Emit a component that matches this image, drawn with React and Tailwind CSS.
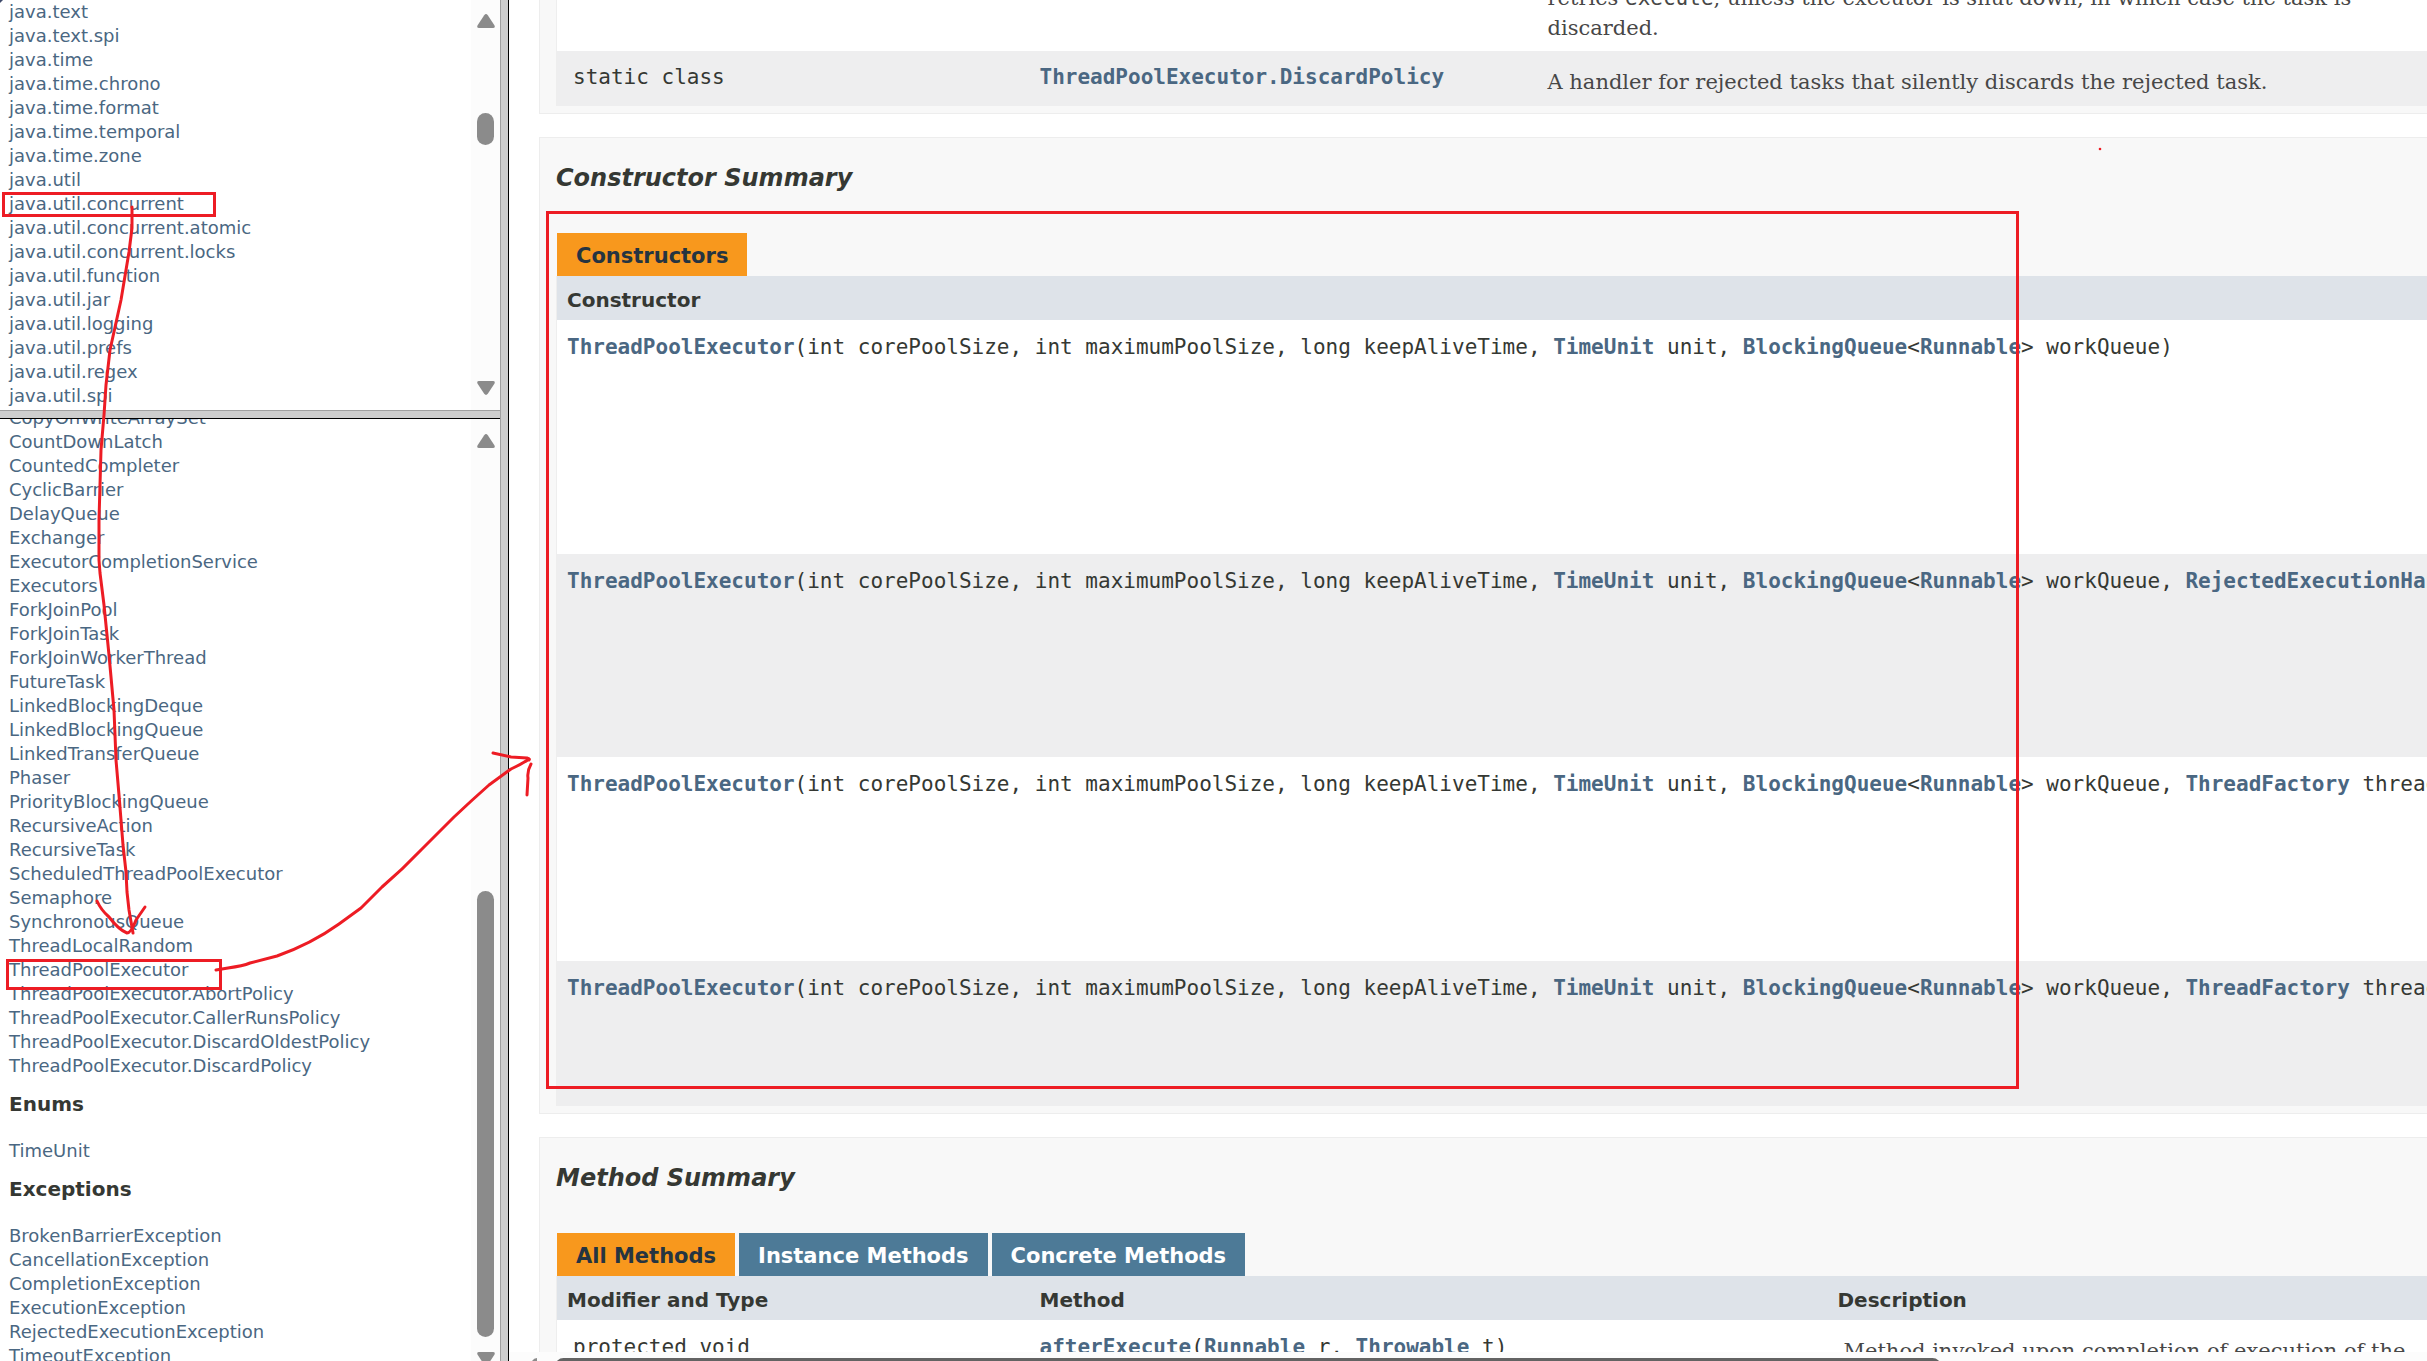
const packages = [
  'java.text', 'java.text.spi', 'java.time', 'java.time.chrono', 'java.time.format',
  'java.time.temporal', 'java.time.zone', 'java.util', 'java.util.concurrent',
  'java.util.concurrent.atomic', 'java.util.concurrent.locks', 'java.util.function',
  'java.util.jar', 'java.util.logging', 'java.util.prefs', 'java.util.regex', 'java.util.spi',
];

const classes = [
  'CopyOnWriteArraySet', 'CountDownLatch', 'CountedCompleter', 'CyclicBarrier', 'DelayQueue',
  'Exchanger', 'ExecutorCompletionService', 'Executors', 'ForkJoinPool', 'ForkJoinTask',
  'ForkJoinWorkerThread', 'FutureTask', 'LinkedBlockingDeque', 'LinkedBlockingQueue',
  'LinkedTransferQueue', 'Phaser', 'PriorityBlockingQueue', 'RecursiveAction', 'RecursiveTask',
  'ScheduledThreadPoolExecutor', 'Semaphore', 'SynchronousQueue', 'ThreadLocalRandom',
  'ThreadPoolExecutor', 'ThreadPoolExecutor.AbortPolicy', 'ThreadPoolExecutor.CallerRunsPolicy',
  'ThreadPoolExecutor.DiscardOldestPolicy', 'ThreadPoolExecutor.DiscardPolicy',
];

const exceptions = [
  'BrokenBarrierException', 'CancellationException', 'CompletionException',
  'ExecutionException', 'RejectedExecutionException', 'TimeoutException',
];

function LinkList({ items }) {
  return (
    <ul className="text-[18px] leading-6 text-[#4A6782]">
      {items.map((name) => (
        <li key={name}><a href="#">{name}</a></li>
      ))}
    </ul>
  );
}

function Arrow({ down }) {
  return (
    <svg viewBox="0 0 18 14" className={down ? 'h-[14px] w-[18px] shrink-0 rotate-180' : 'h-[14px] w-[18px] shrink-0'}>
      <path d="M7.2 1.2Q9 -1 10.8 1.2L17.4 11.2Q18.6 14 16 14H2Q-0.6 14 0.6 11.2Z" fill="#8b8b8b" />
    </svg>
  );
}

function TypeLink({ children }) {
  return <a href="#" className="font-bold text-[#4A6782]">{children}</a>;
}

function Heading({ children }) {
  return <h3 className="text-[24px] leading-8 font-bold italic">{children}</h3>;
}

function Tab({ active, children }) {
  return (
    <button
      type="button"
      className={
        active
          ? 'h-[43px] bg-[#F8981D] px-[19px] pt-1 text-[21px] font-bold text-[#253441]'
          : 'h-[43px] bg-[#4D7A97] px-[19px] pt-1 text-[21px] font-bold text-white'
      }
    >
      {children}
    </button>
  );
}

function HeadCell({ children }) {
  return (
    <th className="h-11 bg-[#dee3e9] px-[10px] pt-1 text-left text-[20px] font-bold">{children}</th>
  );
}

const mono = "font-['DejaVu_Sans_Mono',monospace] text-[21px] leading-[30px]";
const serif = "font-['DejaVu_Serif',serif] text-[21px] leading-[30px] text-[#474747]";

function Constructor({ className, children }) {
  return (
    <tr className={className}>
      <td className="px-[10px] pt-3 align-top whitespace-nowrap">
        <code className={mono}>
          <TypeLink>ThreadPoolExecutor</TypeLink>(int corePoolSize, int maximumPoolSize, long keepAliveTime,{' '}
          <TypeLink>TimeUnit</TypeLink> unit, <TypeLink>BlockingQueue</TypeLink>&lt;<TypeLink>Runnable</TypeLink>&gt; workQueue{children})
        </code>
      </td>
    </tr>
  );
}

function Annotations() {
  return (
    <svg className="pointer-events-none absolute top-0 left-0 h-[1361px] w-[2427px]" viewBox="0 0 2427 1361" fill="none" stroke="#ED1C24" strokeWidth="3">
      <path d="M0 0H3L0 3Z" fill="#3f4a6b" stroke="none" />
      <rect x="3.500" y="193.500" width="211" height="22" />
      <rect x="7.500" y="960.500" width="213" height="28" />
      <rect x="547.500" y="212.500" width="1470" height="875" />
      <g strokeLinecap="round" strokeLinejoin="round" strokeWidth="3">
        <path d="M132 207V228L129 252L121 300L110 350L106 385L104 415L101 450L99 520V560L100 573L104 605L109 655L114 710L116 760L119 795L123 845L126 872L127 892L129 910L133 933" />
        <path d="M97 901Q101 910 109 917Q119 930 127 933Q131 933 136 920L145 907" />
        <path d="M216 970L228 968Q243 966 250 963L277 956Q311 944 339 924L361 908L382 887Q402 870 421 850L454 817Q472 800 489 785L511 769Q522 764 529 759" />
        <path d="M493 753Q502 755 511 757L527 758Q530 759 529 760" />
        <path d="M531 764Q527 771 528 778L527 795" />
      </g>
      <circle cx="2100" cy="149" r="1.300" fill="#ED1C24" stroke="none" />
    </svg>
  );
}

export default function App() {
  return (
    <div className="relative flex h-screen overflow-hidden bg-white font-['DejaVu_Sans',sans-serif] text-[#353833]">
      <aside className="flex w-[509px] shrink-0 border-r border-black">
        <div className="flex min-w-0 flex-1 flex-col">
          <nav className="flex h-[410px] shrink-0 overflow-hidden">
            <div className="flex-1 pl-[9px]">
              <LinkList items={packages} />
            </div>
            <div className="flex w-[29px] flex-col items-center bg-[#fcfcfc] pt-[14px] pb-[15px]">
              <Arrow />
              <div className="mt-[85px] h-8 w-[17px] rounded-full bg-[#8b8b8b]" />
              <div className="flex-1" />
              <Arrow down />
            </div>
          </nav>
          <div className="h-[9px] shrink-0 border-t border-b border-t-[#a0a0a0] border-b-black bg-[#cecece]" />
          <nav className="flex min-h-0 flex-1 overflow-hidden">
            <div className="-mt-[13px] flex-1 pl-[9px]">
              <LinkList items={classes} />
              <h2 className="mt-[14px] mb-[23px] text-[20px] leading-6 font-bold">Enums</h2>
              <LinkList items={['TimeUnit']} />
              <h2 className="mt-[14px] mb-[23px] text-[20px] leading-6 font-bold">Exceptions</h2>
              <LinkList items={exceptions} />
            </div>
            <div className="flex w-[29px] flex-col items-center bg-[#fcfcfc] pt-[15px]">
              <Arrow />
              <div className="flex-1" />
              <div className="mb-[15px] h-[446px] w-[17px] shrink-0 rounded-full bg-[#8b8b8b]" />
              <div className="h-[9px] overflow-hidden"><Arrow down /></div>
            </div>
          </nav>
        </div>
        <div className="w-2 border-l border-[#a0a0a0] bg-[#cecece]" />
      </aside>

      <main className="flex min-w-0 flex-1 flex-col">
        <div className="min-h-0 flex-1 overflow-hidden">
          <div className="-mt-[18px] flex w-[130%] flex-col gap-[23px] pl-[30px]">
            <section className="border border-[#ededed] bg-[#f8f8f8] px-4 pb-[7px]">
              <table className="w-full table-fixed border-l border-[#eee]">
                <colgroup>
                  <col className="w-[473px]" />
                  <col className="w-[502px]" />
                  <col />
                </colgroup>
                <tbody>
                  <tr className="bg-white">
                    <td />
                    <td />
                    <td className={`px-4 pb-2 ${serif}`}>
                      retries <code className="font-['DejaVu_Sans_Mono',monospace]">execute</code>, unless the executor is shut down, in which case the task is<br />discarded.
                    </td>
                  </tr>
                  <tr className="bg-[#eeeeef]">
                    <td className={`h-[55px] px-4 pt-[11px] align-top ${mono}`}>static class</td>
                    <td className={`px-[10px] pt-[11px] align-top ${mono}`}><TypeLink>ThreadPoolExecutor.DiscardPolicy</TypeLink></td>
                    <td className={`px-4 pt-4 align-top ${serif}`}>A handler for rejected tasks that silently discards the rejected task.</td>
                  </tr>
                </tbody>
              </table>
            </section>

            <section className="border border-[#ededed] bg-[#f8f8f8] px-4 pt-6 pb-[7px]">
              <Heading>Constructor Summary</Heading>
              <div className="mt-[39px] flex pl-px"><Tab active>Constructors</Tab></div>
              <table className="w-full border-l border-[#eee]">
                <thead><tr><HeadCell>Constructor</HeadCell></tr></thead>
                <tbody>
                  <Constructor className="h-[234px] bg-white" />
                  <Constructor className="h-[203px] bg-[#eeeeef]">, <TypeLink>RejectedExecutionHandler</TypeLink> handler</Constructor>
                  <Constructor className="h-[204px] bg-white">, <TypeLink>ThreadFactory</TypeLink> threadFactory</Constructor>
                  <Constructor className="h-[145px] bg-[#eeeeef]">, <TypeLink>ThreadFactory</TypeLink> threadFactory, <TypeLink>RejectedExecutionHandler</TypeLink> handler</Constructor>
                </tbody>
              </table>
            </section>

            <section className="border border-[#ededed] bg-[#f8f8f8] px-4 pt-6 pb-[7px]">
              <Heading>Method Summary</Heading>
              <div className="mt-[39px] flex gap-1 pl-px">
                <Tab active>All Methods</Tab>
                <Tab>Instance Methods</Tab>
                <Tab>Concrete Methods</Tab>
              </div>
              <table className="w-full table-fixed border-l border-[#eee]">
                <colgroup>
                  <col className="w-[473px]" />
                  <col className="w-[798px]" />
                  <col />
                </colgroup>
                <thead>
                  <tr>
                    <HeadCell>Modifier and Type</HeadCell>
                    <HeadCell>Method</HeadCell>
                    <HeadCell>Description</HeadCell>
                  </tr>
                </thead>
                <tbody>
                  <tr className="bg-white">
                    <td className={`px-4 pt-3 align-top ${mono}`}>protected void</td>
                    <td className={`px-[10px] pt-3 align-top ${mono}`}>
                      <TypeLink>afterExecute</TypeLink>(<TypeLink>Runnable</TypeLink> r, <TypeLink>Throwable</TypeLink> t)
                    </td>
                    <td className={`px-4 pt-4 align-top ${serif}`}>Method invoked upon completion of execution of the</td>
                  </tr>
                </tbody>
              </table>
            </section>
          </div>
        </div>
        <div className="flex h-[9px] shrink-0 items-start gap-[18px] overflow-hidden bg-[#fcfcfc] pt-[6px] pl-5">
          <svg viewBox="0 0 8 14" className="h-[14px] w-2 shrink-0"><path d="M8 0Q5 0 3 3L0 7L8 14Z" fill="#8b8b8b" /></svg>
          <div className="h-[17px] w-[73%] shrink-0 rounded-full bg-[#636363]" />
        </div>
      </main>
      <Annotations />
    </div>
  );
}
